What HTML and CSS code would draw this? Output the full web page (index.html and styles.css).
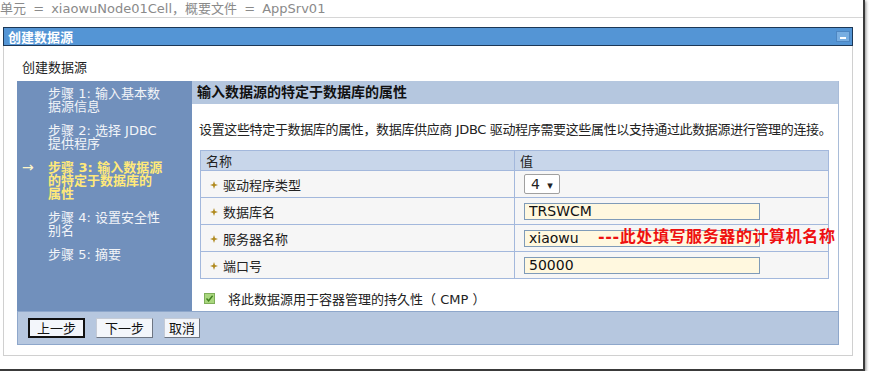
FILE: index.html
```html
<!DOCTYPE html>
<html lang="zh-CN">
<head>
    <meta charset="UTF-8">
    <meta name="viewport" content="width=device-width, initial-scale=1.0">
    <title>创建数据源</title>
    <link rel="stylesheet" href="styles.css">
</head>
<body>
    <div id="shot">
        <div class="scope">单元 = xiaowuNode01Cell，概要文件 = AppSrv01</div>

        <div class="portlet">
            <div class="portlet-title">
                <span>创建数据源</span>
                <span class="minimize"><i></i></span>
            </div>
            <div class="portlet-body">
                <div class="page-label">创建数据源</div>

                <div class="wizard">
                    <div class="wizard-main">
                        <div class="steps">
                            <div class="step">
                                <span class="mark"></span>
                                <span class="step-text">步骤 1: 输入基本数据源信息</span>
                            </div>
                            <div class="step">
                                <span class="mark"></span>
                                <span class="step-text">步骤 2: 选择 JDBC 提供程序</span>
                            </div>
                            <div class="step current">
                                <span class="mark">&rarr;</span>
                                <span class="step-text">步骤 3: 输入数据源的特定于数据库的属性</span>
                            </div>
                            <div class="step">
                                <span class="mark"></span>
                                <span class="step-text">步骤 4: 设置安全性别名</span>
                            </div>
                            <div class="step">
                                <span class="mark"></span>
                                <span class="step-text">步骤 5: 摘要</span>
                            </div>
                        </div>

                        <div class="content">
                            <div class="content-head">输入数据源的特定于数据库的属性</div>
                            <p class="desc">设置这些特定于数据库的属性，数据库供应商 JDBC 驱动程序需要这些属性以支持通过此数据源进行管理的连接。</p>

                            <table class="props">
                                <thead>
                                    <tr>
                                        <th class="col-name">名称</th>
                                        <th>值</th>
                                    </tr>
                                </thead>
                                <tbody>
                                    <tr>
                                        <td><svg class="req" width="8" height="8" viewBox="0 0 8 8"><path d="M4 0 L5 3 L8 4 L5 5 L4 8 L3 5 L0 4 L3 3 Z" fill="#b08a1e"/></svg>驱动程序类型</td>
                                        <td><span class="select">4 <b>&#9662;</b></span></td>
                                    </tr>
                                    <tr>
                                        <td><svg class="req" width="8" height="8" viewBox="0 0 8 8"><path d="M4 0 L5 3 L8 4 L5 5 L4 8 L3 5 L0 4 L3 3 Z" fill="#b08a1e"/></svg>数据库名</td>
                                        <td><input type="text" value="TRSWCM"></td>
                                    </tr>
                                    <tr>
                                        <td><svg class="req" width="8" height="8" viewBox="0 0 8 8"><path d="M4 0 L5 3 L8 4 L5 5 L4 8 L3 5 L0 4 L3 3 Z" fill="#b08a1e"/></svg>服务器名称</td>
                                        <td class="annotated">
                                            <input type="text" value="xiaowu">
                                            <span class="note">---此处填写服务器的计算机名称</span>
                                        </td>
                                    </tr>
                                    <tr>
                                        <td><svg class="req" width="8" height="8" viewBox="0 0 8 8"><path d="M4 0 L5 3 L8 4 L5 5 L4 8 L3 5 L0 4 L3 3 Z" fill="#b08a1e"/></svg>端口号</td>
                                        <td><input type="text" value="50000"></td>
                                    </tr>
                                </tbody>
                            </table>

                            <div class="cmp">
                                <svg class="check" width="11" height="11" viewBox="0 0 11 11">
                                    <rect x="0.5" y="0.5" width="10" height="10" fill="#a9d77e" stroke="#7fae5a"/>
                                    <path d="M2.5 5.5 L4.6 7.8 L8.6 2.8" fill="none" stroke="#3f7f1f" stroke-width="1.4"/>
                                </svg>
                                <span>将此数据源用于容器管理的持久性（ CMP ）</span>
                            </div>
                        </div>
                    </div>

                    <div class="buttons">
                        <button class="btn default">上一步</button>
                        <button class="btn">下一步</button>
                        <button class="btn">取消</button>
                    </div>
                </div>
            </div>
        </div>
    </div>
</body>
</html>
```

FILE: styles.css
```css
body{
    margin: 0;
    background: #fff;
    font-family: "DejaVu Sans", "Noto Sans CJK SC", sans-serif;
    font-size: 13px;
    color: #222;
}

#shot{
    position: relative;
    width: 863px;
    height: 369px;
    border-right: 2px solid #3a3a3a;
    border-bottom: 2px solid #3a3a3a;
    box-shadow: 1px 1px 3px rgba(0, 0, 0, 0.45);
}

.scope{
    height: 17px;
    line-height: 18px;
    color: #8a8a8a;
    word-spacing: 3px;
    border-bottom: 1px solid #d6d6d6;
    white-space: nowrap;
    overflow: hidden;
}

.portlet{
    width: 850px;
    margin: 9px 0 0 3px;
}

.portlet-title{
    display: flex;
    justify-content: space-between;
    align-items: center;
    height: 17px;
    padding: 0 2px 0 4px;
    border: 1px solid #1c3756;
    background-color: #5495d5;
    color: white;
    font-weight: bold;
    font-size: 13px;
}

.minimize{
    display: flex;
    align-items: center;
    justify-content: center;
    width: 12px;
    height: 9px;
    background-color: #78aee2;
    border: 1px solid #4d86c2;
}
.minimize i{
    display: block;
    width: 6px;
    height: 2px;
    margin-top: 2px;
    background: #fff;
}

.portlet-body{
    border: 1px solid #d0d0d0;
    border-top: none;
    padding: 14px 12px 10px 13px;
}

.page-label{
    height: 16px;
    line-height: 16px;
    padding-left: 5px;
    margin-bottom: 5px;
}

.wizard{
    width: 822px;
}

.wizard-main{
    display: flex;
    height: 230px;
}

.steps{
    width: 175px;
    flex-shrink: 0;
    background-color: #7190bc;
    padding-top: 6px;
    box-sizing: border-box;
}

.step{
    display: flex;
    margin-bottom: 11px;
    color: #f2f4f8;
    line-height: 13px;
}
.step .mark{
    width: 26px;
    margin-left: 5px;
    font-size: 14px;
}
.step-text{
    width: 116px;
}
.step.current{
    color: #ffe97a;
    font-weight: bold;
}
.step.current .mark{
    color: #fff6c8;
    font-weight: normal;
}

.content{
    flex: 1;
    min-width: 0;
    background: #fff;
    border-right: 1px solid #a9bcd8;
}

.content-head{
    height: 23px;
    line-height: 23px;
    padding-left: 5px;
    background-color: #b5c7df;
    font-weight: bold;
    font-size: 14px;
    color: #111;
}

.desc{
    margin: 18px 0 0 7px;
    line-height: 16px;
    letter-spacing: -0.35px;
    white-space: nowrap;
}

table.props{
    width: 629px;
    margin: 12px 0 0 8px;
    border-collapse: collapse;
}
.props th{
    height: 18px;
    padding: 0 0 0 5px;
    text-align: left;
    font-weight: normal;
    background-color: #c8d6ea;
    border: 1px solid #a3b8dc;
}
.props th.col-name{
    width: 308px;
}
.props td{
    height: 26px;
    padding: 0 0 0 9px;
    background-color: #f6f6f6;
    border: 1px solid #a3b8dc;
    vertical-align: middle;
}
.req{
    margin: 0 5px 1px 0;
}

.select{
    display: inline-block;
    width: 28px;
    height: 18px;
    line-height: 18px;
    padding-left: 6px;
    background: #fff;
    border: 1px solid #a0a0a0;
    border-radius: 2px;
    font-size: 14px;
}
.select b{
    font-size: 11px;
    margin-left: 3px;
}

input[type=text]{
    width: 236px;
    height: 17px;
    padding: 0 4px;
    margin: 0;
    box-sizing: border-box;
    border: 1px solid #7f9bb8;
    background-color: #fff8df;
    font-family: "DejaVu Sans", sans-serif;
    font-size: 14px;
    color: #111;
}

.annotated{
    position: relative;
}
.note{
    position: absolute;
    left: 83px;
    top: 3px;
    color: #ee1010;
    font-weight: bold;
    font-size: 16px;
    letter-spacing: 0.6px;
    line-height: 18px;
    white-space: nowrap;
}

.cmp{
    display: flex;
    align-items: center;
    margin: 10px 0 0 12px;
}
.check{
    margin-right: 13px;
}

.buttons{
    display: flex;
    gap: 11px;
    height: 34px;
    padding: 6px 0 0 10px;
    box-sizing: border-box;
    background-color: #b6c7df;
    border: 1px solid #8ea7cb;
}
.btn{
    height: 20px;
    padding: 0 4px;
    font-family: "Noto Sans CJK SC", sans-serif;
    font-size: 13px;
    line-height: 16px;
    background-color: #f3f6fb;
    border: 1px solid #c5cbd6;
    border-right-color: #6d7582;
    border-bottom-color: #6d7582;
    color: #111;
}
.btn:nth-child(2){
    width: 57px;
}
.btn.default{
    width: 57px;
    border: 2px solid #111;
}
```
